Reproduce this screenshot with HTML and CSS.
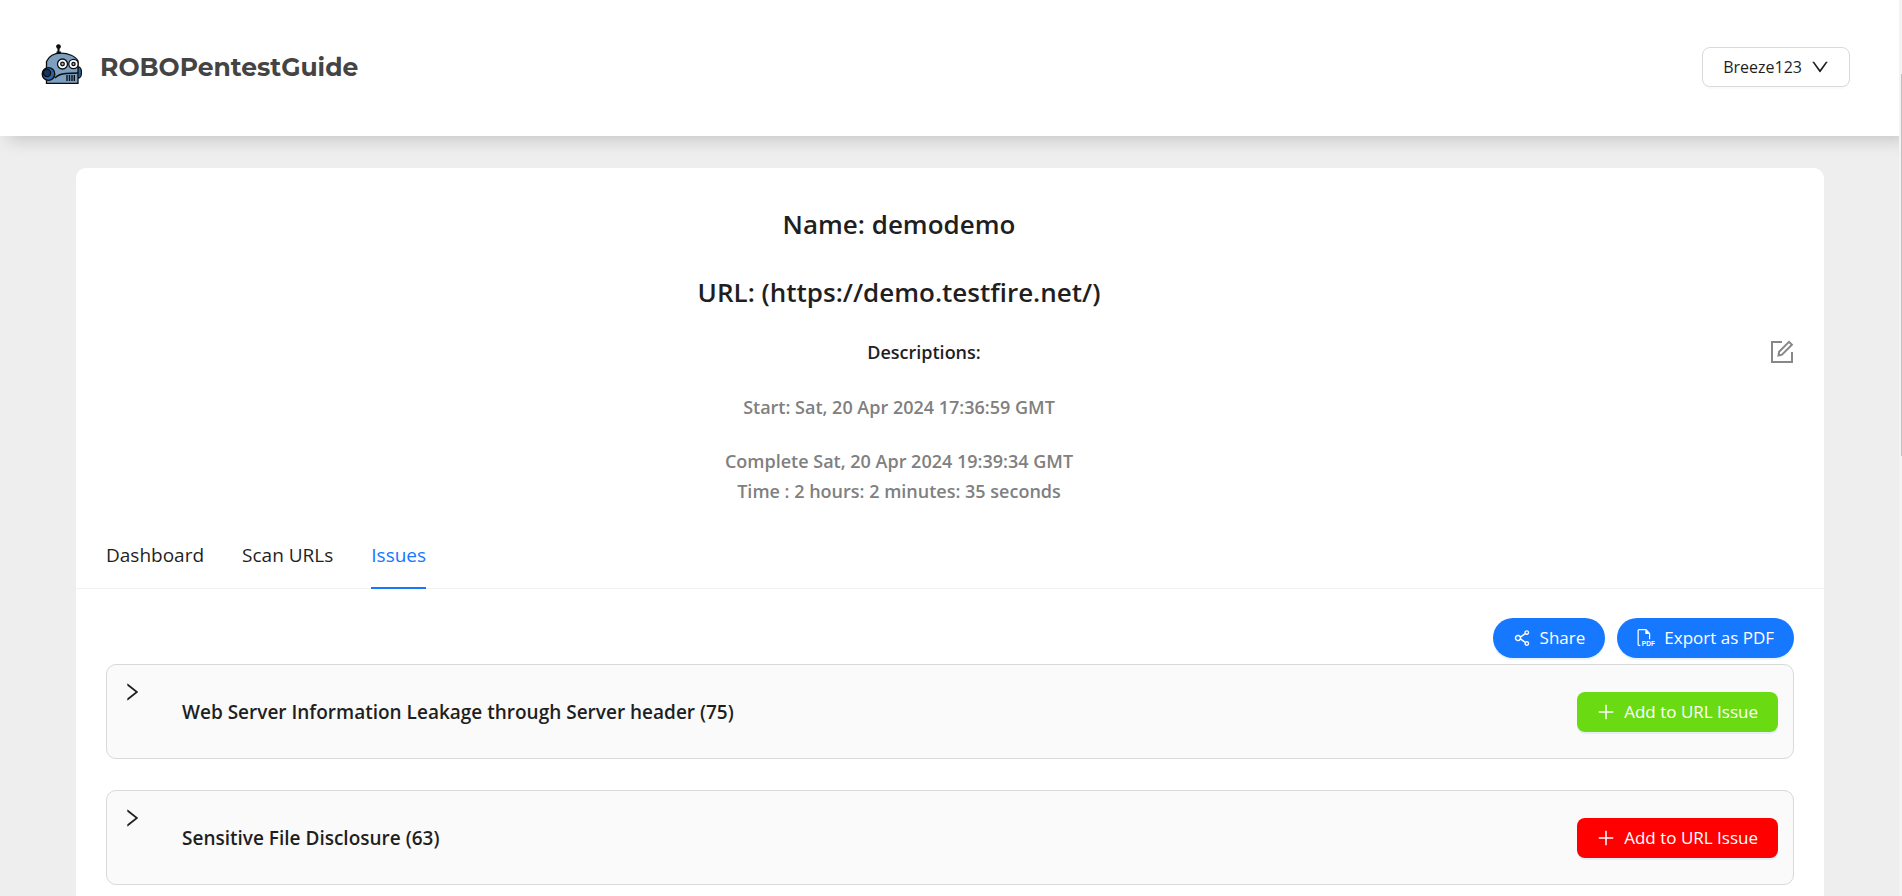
FILE: index.html
```html
<!DOCTYPE html>
<html lang="en">
<head>
<meta charset="utf-8">
<meta name="viewport" content="width=device-width, initial-scale=1">
<title>ROBOPentestGuide</title>
<link rel="stylesheet" href="styles.css">
</head>
<body>
<svg class="sprite" aria-hidden="true">
  <symbol id="plus" viewBox="64 64 896 896"><path d="M482 152h60q8 0 8 8v704q0 8-8 8h-60q-8 0-8-8V160q0-8 8-8z"/><path d="M192 474h672q8 0 8 8v60q0 8-8 8H160q-8 0-8-8v-60q0-8 8-8z"/></symbol>
  <symbol id="right" viewBox="64 64 896 896"><path d="M765.7 486.8L314.9 134.7A7.97 7.97 0 00302 141v77.3c0 4.9 2.3 9.6 6.1 12.6l360 281.1-360 281.1c-3.9 3-6.1 7.7-6.1 12.6V883c0 6.7 7.7 10.4 12.9 6.3l450.8-352.1a31.96 31.96 0 000-50.4z"/></symbol>
</svg>

<header class="topbar">
  <a class="brand" href="#">
    <svg class="brand-logo" viewBox="0 0 41 41" aria-hidden="true">
      <g stroke="#0b0d10" stroke-width="1.3">
        <ellipse cx="37.5" cy="28.5" rx="3" ry="5.5" fill="#2a62a3"/>
        <path d="M5.5 39.3V17.5C8 12 13 9.200 20 9.200S34.500 12 37 17v22.300z" fill="#7e9fbf"/>
        <path d="M17.500 9V3.500" stroke-width="2"/>
        <circle cx="17.500" cy="2.500" r="1.700" fill="#0b0d10"/>
        <path d="M15.500 8.500h4.500" stroke-width="2"/>
        <path d="M14 34c2-2.500 6-4 11-4.500l12-.5" fill="none"/>
        <circle cx="7.500" cy="30" r="6.300" fill="#2a62a3"/>
        <circle cx="6" cy="29" r="3.600" fill="#17365c"/>
        <circle cx="32.500" cy="20" r="4.700" fill="#fff"/>
        <circle cx="21.500" cy="20" r="5" fill="#fff"/>
        <circle cx="21.500" cy="20" r="1.800" fill="#aaa"/>
        <circle cx="32.500" cy="20" r="1.600" fill="#aaa"/>
        <path d="M26 31v6M28.500 31v6M31 31v6M33.300 31v6" stroke-width="1.400"/>
      </g>
    </svg>
    <span>ROBOPentestGuide</span>
  </a>
  <button class="btn btn-user" type="button">
    <span>Breeze123</span>
    <svg class="icon" viewBox="64 64 896 896" aria-hidden="true"><path d="M884 256h-75c-5.100 0-9.900 2.500-12.900 6.600L512 654.200 227.900 262.600c-3-4.100-7.800-6.600-12.900-6.600h-75c-6.500 0-10.300 7.400-6.500 12.700l352.600 486.100c12.800 17.600 39 17.600 51.700 0l352.600-486.100c3.900-5.300.1-12.700-6.400-12.700z"/></svg>
  </button>
</header>

<main class="panel">
  <section class="summary">
    <div class="summary-text">
      <h1 class="title">Name: demodemo</h1>
      <h1 class="title">URL: (https://demo.testfire.net/)</h1>
    </div>
    <h2 class="description">Descriptions:</h2>
    <button class="edit" type="button" aria-label="Edit description">
      <svg viewBox="0 0 24 24" aria-hidden="true"><path d="M12 2H2v20h20V12M8.500 15.500l.6-3.700L19 1.900l2.900 2.900-9.900 9.900z"/></svg>
    </button>
    <div class="times">
      <p>Start: Sat, 20 Apr 2024 17:36:59 GMT</p>
      <p>Complete Sat, 20 Apr 2024 19:39:34 GMT<br>Time : 2 hours: 2 minutes: 35 seconds</p>
    </div>
  </section>

  <nav class="tabs">
    <a class="tab" href="#dashboard">Dashboard</a>
    <a class="tab" href="#urls">Scan URLs</a>
    <a class="tab tab-active" href="#issues" aria-current="page">Issues</a>
  </nav>

  <section class="issues">
    <div class="actions">
      <button class="btn btn-pill" type="button">
        <svg class="icon" viewBox="64 64 896 896" aria-hidden="true"><path d="M752 664c-28.500 0-54.800 10-75.400 26.700L469.400 540.800a160.680 160.680 0 000-57.600l207.200-149.900C697.200 350 723.500 360 752 360c66.200 0 120-53.800 120-120s-53.800-120-120-120-120 53.800-120 120c0 11.600 1.600 22.700 4.700 33.300L439.900 415.800C410.700 377.100 364.300 352 312 352c-88.400 0-160 71.600-160 160s71.600 160 160 160c52.300 0 98.700-25.100 127.900-63.800l196.800 142.500c-3.100 10.600-4.700 21.800-4.700 33.300 0 66.200 53.800 120 120 120s120-53.800 120-120-53.800-120-120-120zm0-476c28.700 0 52 23.300 52 52s-23.300 52-52 52-52-23.300-52-52 23.300-52 52-52zM312 600c-48.500 0-88-39.500-88-88s39.500-88 88-88 88 39.500 88 88-39.500 88-88 88zm440 236c-28.700 0-52-23.300-52-52s23.300-52 52-52 52 23.300 52 52-23.300 52-52 52z"/></svg>
        <span>Share</span>
      </button>
      <button class="btn btn-pill" type="button">
        <svg class="icon" viewBox="1 0 19 19" aria-hidden="true"><path class="line" d="M4.500 17.300H3.200a1 1 0 0 1-1-1V1.700a1 1 0 0 1 1-1h7.300l3.800 4v6"/><path d="M9.800.5v4.800h4.900z"/><text class="file-type" x="6" y="18">PDF</text></svg>
        <span>Export as PDF</span>
      </button>
    </div>
    <article class="issue">
      <button class="expand" type="button" aria-label="Expand"><svg aria-hidden="true"><use href="#right"/></svg></button>
      <h3 class="issue-title">Web Server Information Leakage through Server header (75)</h3>
      <button class="btn btn-add btn-green" type="button"><svg class="icon" aria-hidden="true"><use href="#plus"/></svg><span>Add to URL Issue</span></button>
    </article>
    <article class="issue">
      <button class="expand" type="button" aria-label="Expand"><svg aria-hidden="true"><use href="#right"/></svg></button>
      <h3 class="issue-title">Sensitive File Disclosure (63)</h3>
      <button class="btn btn-add btn-red" type="button"><svg class="icon" aria-hidden="true"><use href="#plus"/></svg><span>Add to URL Issue</span></button>
    </article>
  </section>
</main>
<div class="scrollbar" aria-hidden="true"><div class="scrollbar-thumb"></div></div>
</body>
</html>
```

FILE: styles.css
```css
* { box-sizing: border-box; }

html { overflow: hidden; }

body {
  margin: 0;
  padding-right: 2px;
  min-height: 100vh;
  background: #eee;
  color: #1f1f1f;
  font-family: "Segoe UI", "Open Sans", "Noto Sans", sans-serif;
  font-size: 17px;
  line-height: 24px;
}

h1, h2, h3, p { margin: 0; }
a { color: inherit; text-decoration: none; }
button { font: inherit; color: inherit; cursor: pointer; }
svg { display: block; fill: currentColor; }
.sprite { position: absolute; width: 0; height: 0; }

.topbar {
  display: flex;
  align-items: center;
  justify-content: space-between;
  height: 136px;
  padding: 0 50px 2px 41px;
  background: #fff;
  box-shadow: 8px 4px 16px rgba(0, 0, 0, 0.17);
}

.brand {
  display: flex;
  align-items: center;
  gap: 18px;
  color: #444;
  font-family: Montserrat, Inter, sans-serif;
  font-size: 25px;
  font-weight: 700;
}
.brand-logo { width: 41px; height: 41px; margin-bottom: 6px; }

.btn {
  display: inline-flex;
  align-items: center;
  justify-content: center;
  gap: 9px;
  height: 40px;
  padding: 0 20px;
  border: 0;
  border-radius: 8px;
  white-space: nowrap;
}
.icon { flex: none; width: 18px; height: 18px; }

.btn-user {
  border: 1px solid #d9d9d9;
  background: #fff;
  box-shadow: 0 2px 0 rgba(0, 0, 0, 0.02);
  font-size: 16px;
}

.panel {
  margin: 32px 4% 0;
  min-height: 760px;
  border-radius: 10px;
  background: #fff;
}

.summary {
  display: grid;
  grid-template-columns: 1fr 102px;
  align-items: center;
  padding: 0 30px;
  text-align: center;
}
.summary-text { padding: 39px 0 31px; }
.title {
  font-size: 26px;
  font-weight: 600;
  line-height: 34px;
}
.title + .title { margin-top: 34px; }
.summary-text, .description, .times { grid-column: 1; }
.description {
  padding-left: 50px;
  font-size: 18px;
  font-weight: 600;
  line-height: 24px;
}
.edit {
  grid-column: 2;
  justify-self: end;
  padding: 0;
  border: 0;
  background: none;
  color: #888;
}
.edit svg {
  width: 24px;
  height: 24px;
  fill: none;
  stroke: currentColor;
  stroke-width: 2;
}
.times {
  padding-top: 28px;
  color: #808080;
  font-size: 18px;
  font-weight: 600;
  line-height: 30px;
}
.times p + p { margin-top: 24px; }

.tabs {
  display: flex;
  gap: 38px;
  margin-top: 19px;
  padding: 0 30px;
  border-bottom: 1px solid #f0f0f0;
  font-size: 19px;
}
.tab {
  margin-bottom: -1px;
  padding: 18px 0 20px;
  border-bottom: 2px solid transparent;
}
.tab-active { border-color: #1677ff; color: #1677ff; }

.issues { padding: 29px 30px 0; }
.actions {
  display: flex;
  justify-content: flex-end;
  gap: 12px;
  margin-bottom: 6px;
}
.btn-pill {
  border-radius: 20px;
  background: #1677ff;
  color: #fff;
  box-shadow: 0 2px 0 rgba(5, 145, 255, 0.1);
}
.line { fill: none; stroke: currentColor; stroke-width: 1.3; }
.file-type { font: 700 7px "Liberation Sans", sans-serif; }

.issue {
  display: flex;
  align-items: center;
  height: 95px;
  margin-bottom: 31px;
  padding: 0 15px;
  border: 1px solid #d9d9d9;
  border-radius: 10px;
  background: #fafafa;
}
.expand {
  align-self: flex-start;
  margin-top: 17px;
  padding: 0;
  border: 0;
  background: none;
}
.expand svg { width: 20px; height: 20px; }
.issue-title {
  flex: 1;
  margin-left: 40px;
  font-size: 19px;
  font-weight: 600;
}
.btn-add {
  color: #fff;
  box-shadow: 0 2px 0 rgba(5, 145, 255, 0.1);
}
.btn-green { background: #6adb12; }
.btn-red { background: #f00; }

.scrollbar {
  position: fixed;
  top: 0;
  right: 0;
  bottom: 0;
  width: 3px;
  padding: 74px 0 0 2px;
  background: #f3f3f3;
}
.scrollbar-thumb { height: 382px; background: #c1c1c1; }
```
